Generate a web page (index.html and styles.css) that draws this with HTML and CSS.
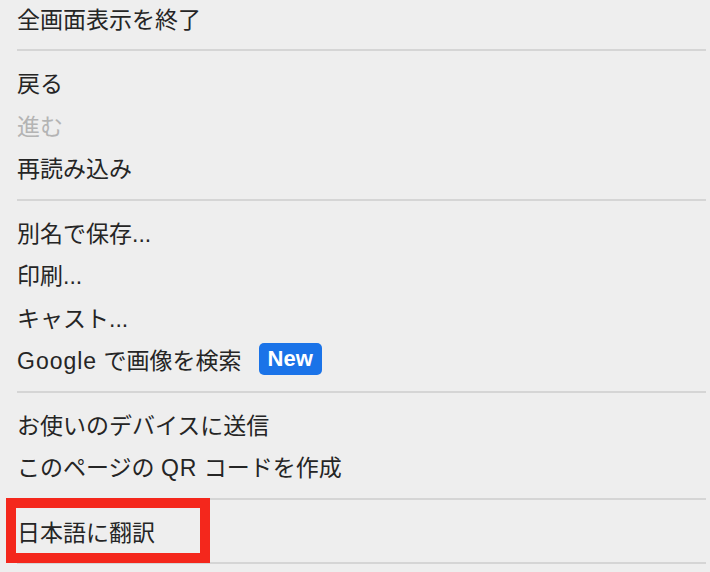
FILE: index.html
```html
<!DOCTYPE html>
<html lang="ja">
<head>
<meta charset="utf-8">
<link rel="stylesheet" href="styles.css">
</head>
<body>
<div class="menu">
  <div class="item">全画面表示を終了</div>
  <div class="sep"></div>
  <div class="item">戻る</div>
  <div class="item disabled">進む</div>
  <div class="item">再読み込み</div>
  <div class="sep"></div>
  <div class="item">別名で保存...</div>
  <div class="item">印刷...</div>
  <div class="item">キャスト...</div>
  <div class="item"><span><span class="lat">Google</span> で画像を検索</span><span class="badge">New</span></div>
  <div class="sep"></div>
  <div class="item">お使いのデバイスに送信</div>
  <div class="item"><span>このページの <span class="lat">QR</span> コードを作成</span></div>
  <div class="sep"></div>
  <div class="item highlight">日本語に翻訳</div>
  <div class="sep"></div>
</div>
</body>
</html>
```

FILE: styles.css
```css
html, body {
  margin: 0;
  padding: 0;
  background: #eeeeee;
}
body {
  width: 710px;
  height: 572px;
  overflow: hidden;
  font-family: "Liberation Sans", "Noto Sans CJK JP", sans-serif;
  color: #252525;
}
.menu {
  margin-top: -3.5px;
  display: flex;
  flex-direction: column;
}
.item {
  height: 42.5px;
  display: flex;
  align-items: center;
  padding-left: 17px;
  font-size: 23px;
  white-space: nowrap;
}
.lat {
  letter-spacing: 1px;
}
.item.disabled {
  color: #b4b4b4;
}
.sep {
  height: 2px;
  background: #d5d5d5;
  margin: 10px 4px 10px 17px;
}
.badge {
  margin-left: 17px;
  background: #1a73e8;
  color: #ffffff;
  font-weight: 700;
  font-size: 22px;
  line-height: 32px;
  height: 32px;
  padding: 0 9px;
  border-radius: 5px;
}
.item.highlight {
  position: relative;
}
.item.highlight::after {
  content: "";
  position: absolute;
  left: 6px;
  top: -11.5px;
  width: 204px;
  height: 65px;
  box-sizing: border-box;
  border: 10px solid #f4271c;
}
```
